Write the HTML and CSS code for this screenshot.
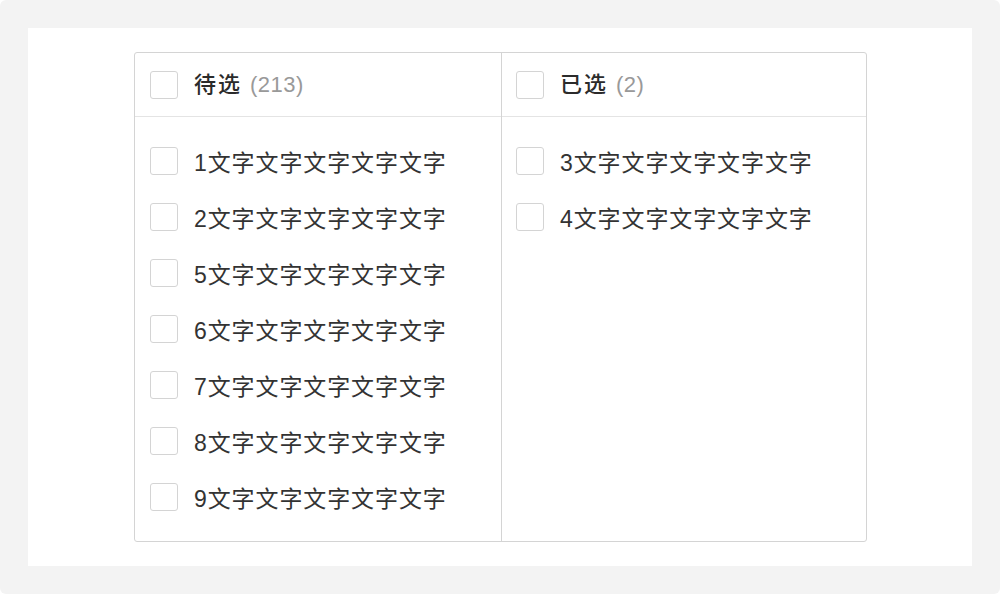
FILE: index.html
```html
<!DOCTYPE html>
<html lang="zh">
<head>
<meta charset="utf-8">
<link rel="stylesheet" href="styles.css">
</head>
<body>
<div class="frame">
  <div class="panel">
    <div class="transfer">
      <div class="col col-left">
        <div class="head">
          <span class="cb"></span>
          <span class="title">待选</span><span class="count">(213)</span>
        </div>
        <ul class="list">
          <li class="item"><span class="cb"></span><span class="label">1文字文字文字文字文字</span></li>
          <li class="item"><span class="cb"></span><span class="label">2文字文字文字文字文字</span></li>
          <li class="item"><span class="cb"></span><span class="label">5文字文字文字文字文字</span></li>
          <li class="item"><span class="cb"></span><span class="label">6文字文字文字文字文字</span></li>
          <li class="item"><span class="cb"></span><span class="label">7文字文字文字文字文字</span></li>
          <li class="item"><span class="cb"></span><span class="label">8文字文字文字文字文字</span></li>
          <li class="item"><span class="cb"></span><span class="label">9文字文字文字文字文字</span></li>
        </ul>
      </div>
      <div class="col col-right">
        <div class="head">
          <span class="cb"></span>
          <span class="title">已选</span><span class="count">(2)</span>
        </div>
        <ul class="list">
          <li class="item"><span class="cb"></span><span class="label">3文字文字文字文字文字</span></li>
          <li class="item"><span class="cb"></span><span class="label">4文字文字文字文字文字</span></li>
        </ul>
      </div>
    </div>
  </div>
</div>
</body>
</html>
```

FILE: styles.css
```css
* { box-sizing: border-box; }
html, body { margin: 0; padding: 0; background: #ffffff; }
body {
  font-family: "Liberation Sans", "Noto Sans CJK SC", sans-serif;
  color: #333333;
}
.frame {
  width: 1000px;
  height: 594px;
  background: #f3f3f3;
  border-radius: 6px;
  padding: 28px;
}
.panel {
  background: #ffffff;
  height: 538px;
  padding: 24px 0 0 106px;
}
.transfer {
  width: 733px;
  height: 490px;
  border: 1px solid #d4d4d4;
  border-radius: 3px;
  display: grid;
  grid-template-columns: 367px 1fr;
}
.col-left { border-right: 1px solid #d4d4d4; }
.head {
  height: 64px;
  border-bottom: 1px solid #e4e4e4;
  display: flex;
  align-items: center;
  padding-left: 15px;
}
.col-right .head, .col-right .item { padding-left: 14px; }
.cb {
  width: 28px;
  height: 28px;
  border: 1px solid #d4d4d4;
  border-radius: 3px;
  background: #fff;
  flex: none;
  margin-right: 16px;
}
.title {
  font-size: 22px;
  line-height: 28px;
  letter-spacing: 2px;
  font-weight: 500;
  color: #2b2b2b;
}
.count {
  font-size: 22px;
  line-height: 28px;
  color: #999999;
  margin-left: 8px;
  letter-spacing: 0.5px;
}
.list {
  list-style: none;
  margin: 0;
  padding: 16px 0;
}
.item {
  height: 56px;
  display: flex;
  align-items: center;
  padding-left: 15px;
}
.label {
  font-size: 23px;
  line-height: 28px;
  letter-spacing: 0.9px;
  color: #333;
  padding-top: 4px;
}
```
